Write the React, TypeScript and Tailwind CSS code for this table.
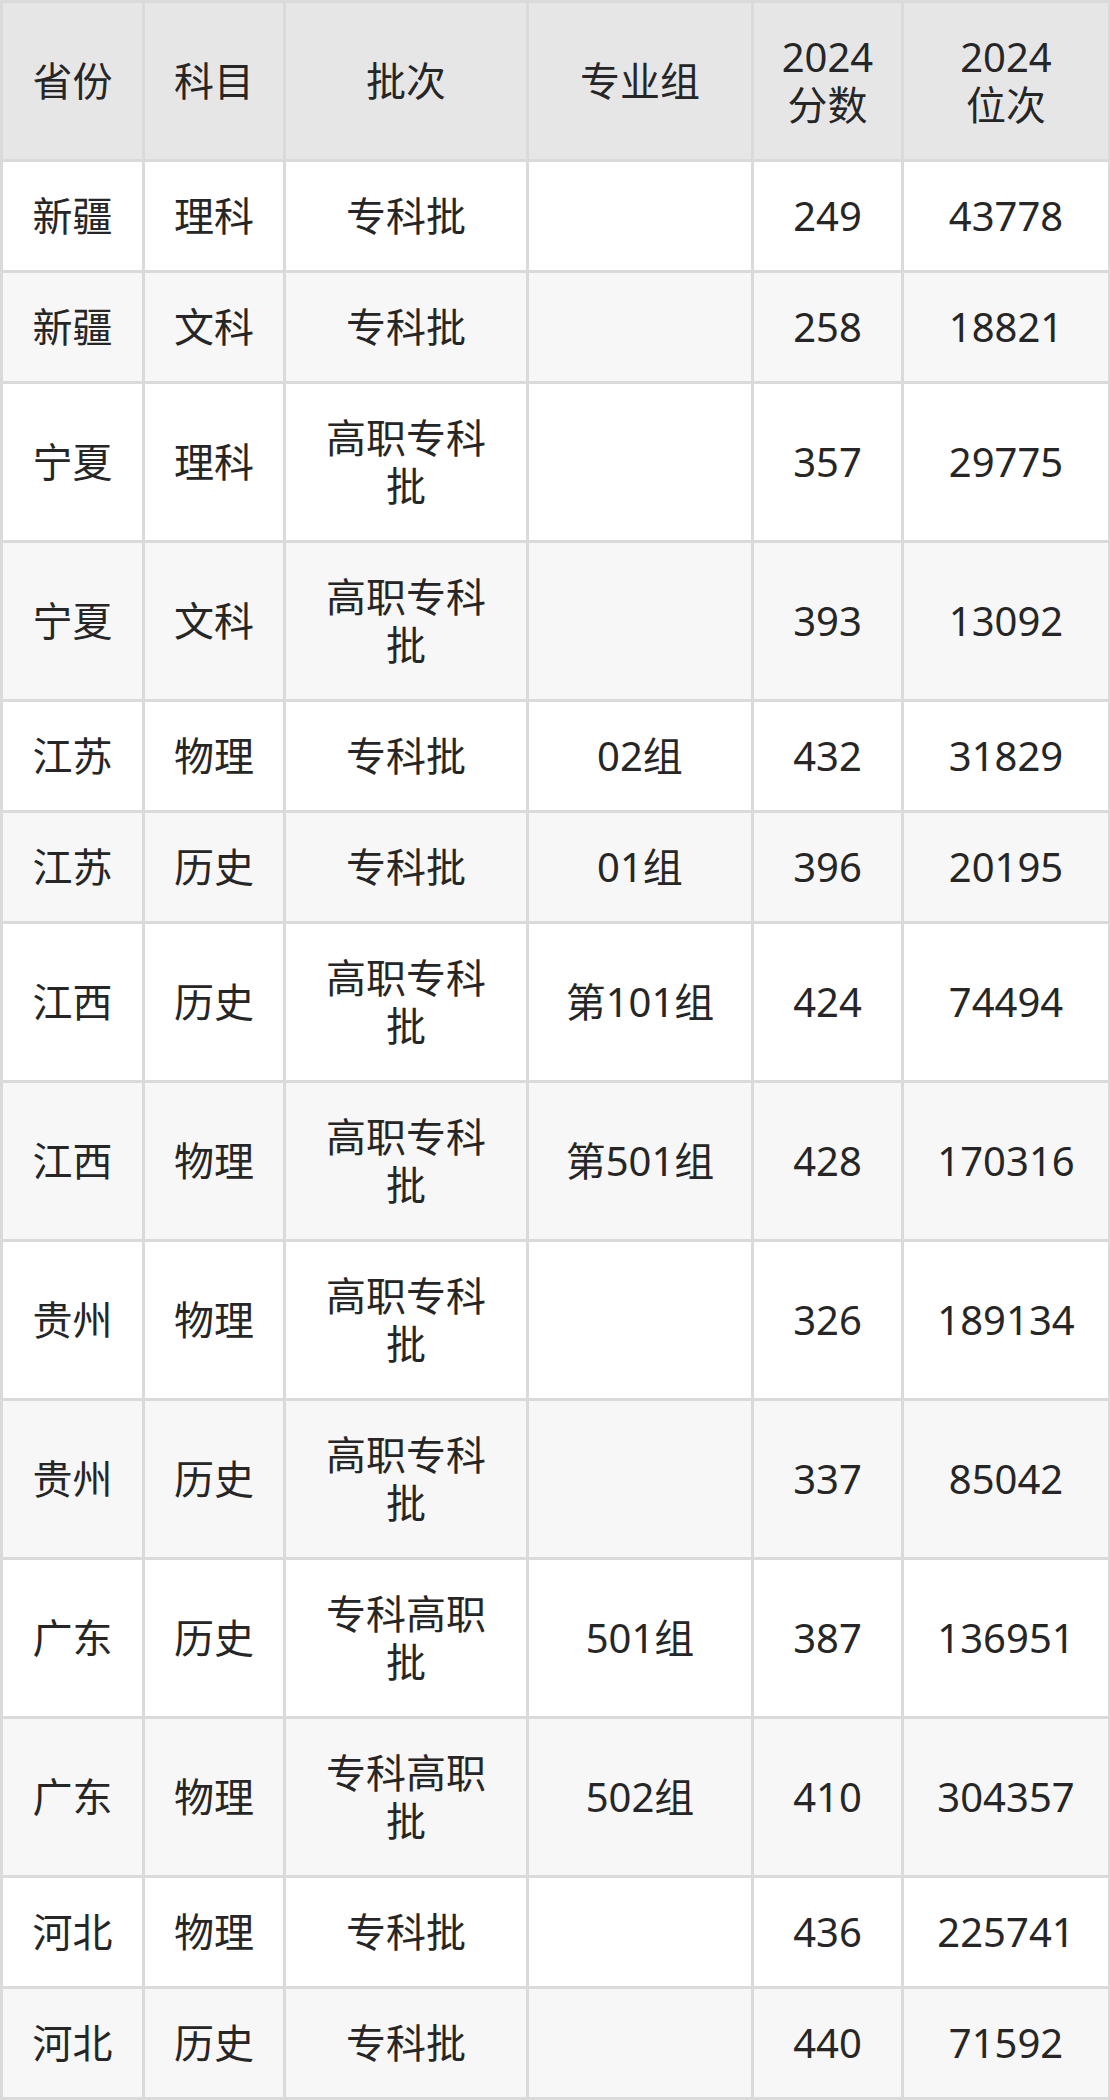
import React from "react";

type Row = [string, string, string, string, string, string];

const rows: Row[] = [
  ["新疆", "理科", "专科批", "", "249", "43778"],
  ["新疆", "文科", "专科批", "", "258", "18821"],
  ["宁夏", "理科", "高职专科批", "", "357", "29775"],
  ["宁夏", "文科", "高职专科批", "", "393", "13092"],
  ["江苏", "物理", "专科批", "02组", "432", "31829"],
  ["江苏", "历史", "专科批", "01组", "396", "20195"],
  ["江西", "历史", "高职专科批", "第101组", "424", "74494"],
  ["江西", "物理", "高职专科批", "第501组", "428", "170316"],
  ["贵州", "物理", "高职专科批", "", "326", "189134"],
  ["贵州", "历史", "高职专科批", "", "337", "85042"],
  ["广东", "历史", "专科高职批", "501组", "387", "136951"],
  ["广东", "物理", "专科高职批", "502组", "410", "304357"],
  ["河北", "物理", "专科批", "", "436", "225741"],
  ["河北", "历史", "专科批", "", "440", "71592"],
];

const cell =
  "border-[3px] border-[#dadada] px-[24px] py-[30px] text-center align-middle leading-[48px]";

export default function App() {
  return (
    <div
      className="w-[1110px] bg-white text-[#262626]"
      style={{ fontFamily: '"Noto Sans", "Noto Sans CJK SC", sans-serif' }}
    >
      <table className="table-fixed border-collapse w-[1108px] text-[40px]">
        <colgroup>
          <col className="w-[142px]" />
          <col className="w-[141px]" />
          <col className="w-[243px]" />
          <col className="w-[225px]" />
          <col className="w-[150px]" />
          <col className="w-[207px]" />
        </colgroup>
        <thead>
          <tr className="bg-[#e6e6e6]">
            <th className={`${cell} font-normal border-[#d2d2d2]`}>省份</th>
            <th className={`${cell} font-normal border-[#d2d2d2]`}>科目</th>
            <th className={`${cell} font-normal border-[#d2d2d2]`}>批次</th>
            <th className={`${cell} font-normal border-[#d2d2d2]`}>专业组</th>
            <th className={`${cell} font-normal border-[#d2d2d2]`}>
              2024
              <br />
              分数
            </th>
            <th className={`${cell} font-normal border-[#d2d2d2]`}>
              2024
              <br />
              位次
            </th>
          </tr>
        </thead>
        <tbody>
          {rows.map((r, i) => (
            <tr key={i} className={i % 2 === 0 ? "bg-white" : "bg-[#f7f7f7]"}>
              {r.map((c, j) => (
                <td key={j} className={cell}>
                  {c}
                </td>
              ))}
            </tr>
          ))}
        </tbody>
      </table>
    </div>
  );
}
